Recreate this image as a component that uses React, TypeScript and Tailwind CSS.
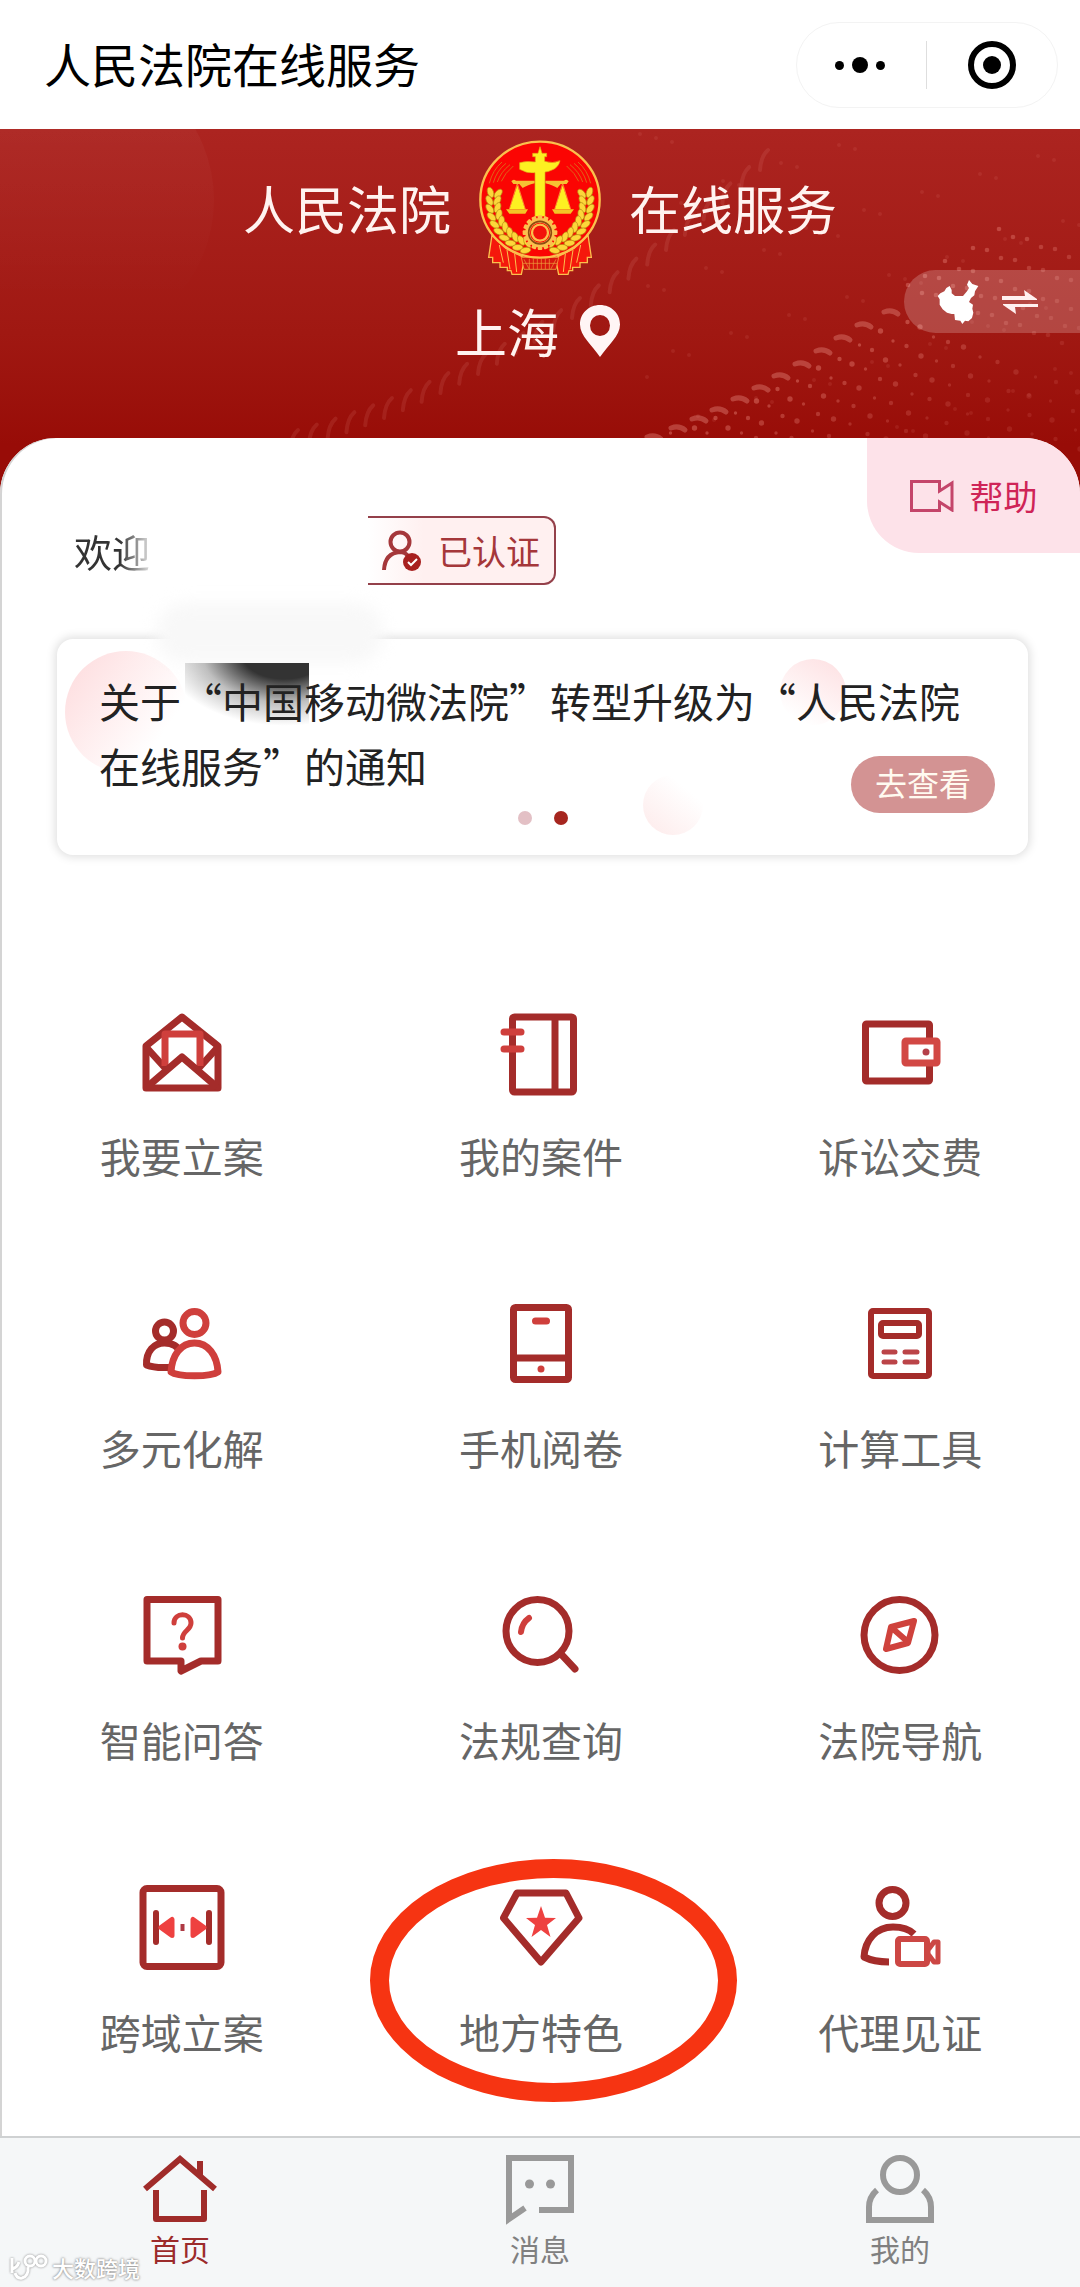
import type { ReactNode } from "react";

const DARK = "#a42c2a";
const LIGHT = "#cf3f3c";

/* ---------- header art ---------- */

type Dot = { x: number; y: number; r: number; o: number };

const strandHeads = [
  [888, 312], [861, 324], [840, 336], [820, 348], [799, 360], [778, 371], [758, 382],
  [737, 392], [716, 402], [696, 410], [675, 418], [651, 426],
];

const dots: Dot[] = [];
strandHeads.forEach(([x, y], s) => {
  for (let i = 1; i < 16; i++) {
    dots.push({
      x: x + 8 + i * (11 + i * 0.5),
      y: y + i * 7 + ((s * 7 + i * 3) % 5),
      r: 1.7 + ((s + i) % 3) * 0.5,
      o: Math.max(0.14, 0.42 - i * 0.03),
    });
  }
});
[[999, 243], [973, 259], [945, 275], [925, 287], [908, 299]].forEach(([x, y], s) => {
  for (let i = 0; i < 12; i++) {
    dots.push({ x: x + i * 14, y: y - 14 + i * 5 + ((i + s) % 2) * 3, r: 2.3, o: 0.36 - i * 0.02 });
  }
});
for (let i = 0; i < 70; i++) {
  dots.push({ x: 640 + ((i * 83) % 440), y: 134 + ((i * 47) % 300), r: 2, o: 0.12 });
}

const faintStreaks = Array.from({ length: 26 }, (_, i) => {
  const t = i / 25;
  return { x: 290 + 470 * t, y: 430 - 130 * t - 150 * t * t };
});

function HeaderArt() {
  return (
    <svg
      className="absolute inset-0 h-full w-full"
      viewBox="0 129 1080 371"
      preserveAspectRatio="xMaxYMin slice"
      aria-hidden="true"
    >
      <defs>
        <linearGradient id="glow" x1="0" y1="0" x2="0" y2="1">
          <stop offset="0.2" stopColor="#fff" stopOpacity="0.035" />
          <stop offset="0.85" stopColor="#fff" stopOpacity="0" />
        </linearGradient>
      </defs>
      <circle cx="70" cy="200" r="144" fill="url(#glow)" />
      {faintStreaks.map((p, i) => (
        <path
          key={i}
          d={`M${p.x} ${p.y + 20} q1 -14 8 -20`}
          fill="none"
          stroke="#f09a90"
          strokeWidth="4"
          strokeLinecap="round"
          opacity="0.13"
        />
      ))}
      {strandHeads.map(([x, y], i) => (
        <path
          key={i}
          d={`M${x - 4} ${y + i} q8 -3 14 2`}
          fill="none"
          stroke="#e58a80"
          strokeWidth="5"
          strokeLinecap="round"
          opacity="0.4"
        />
      ))}
      {dots.map((d, i) => (
        <circle key={i} cx={d.x} cy={d.y} r={d.r} fill="#f08f84" opacity={d.o} />
      ))}
    </svg>
  );
}

function Emblem() {
  const gold = "#fbc04d";
  const yellow = "#fdf021";
  const leaves = Array.from({ length: 10 }, (_, i) => {
    const a = ((192 - i * 9.5) * Math.PI) / 180;
    return { x: 302 + 140 * Math.cos(a), y: 248 + 138 * Math.sin(a), rot: 10 - i * 9 };
  });
  const teeth = Array.from({ length: 16 }, (_, i) => i * 22.5);
  const half = (
    <>
      <path
        d="M158 345 L148 412 H160 V428 H182 V442 H204 V452 H215 L218 463 H246 L256 414 L200 385 Z"
        fill="#f5180c"
        stroke={gold}
        strokeWidth="4"
      />
      <path d="M180 375 L192 428 M203 390 L212 448 M226 402 L232 456" stroke={gold} strokeWidth="3" fill="none" />
    </>
  );
  const wheat = (
    <>
      {leaves.map((l, i) => (
        <g key={i} transform={`translate(${l.x} ${l.y}) rotate(${l.rot})`} fill="#fdd63a" stroke="#b38d12" strokeWidth="2">
          <ellipse cx="-10" cy="-6" rx="9" ry="16" transform="rotate(-30)" />
          <ellipse cx="10" cy="-6" rx="9" ry="16" transform="rotate(30)" />
        </g>
      ))}
      <path d="M150 190 Q160 150 188 126 M162 188 Q172 152 200 130 M174 186 Q184 156 212 134 M186 184 Q196 160 222 138" stroke="#d8761c" strokeWidth="2.5" fill="none" />
      <path d="M234 190 L210 268 M234 190 L258 268" stroke={gold} strokeWidth="2" />
      <path d="M234 196 L211 268 H257 Z" fill={yellow} />
      <path d="M200 268 H266 L258 281 H210 Z" fill="#f3c526" />
    </>
  );
  return (
    <svg className="h-[136px] w-[122px] shrink-0" viewBox="119 60 366 408" role="img" aria-label="法院徽标">
      {half}
      <g transform="translate(604 0) scale(-1 1)">{half}</g>
      <path d="M246 412 H358 L350 448 H254 Z" fill="#d8170e" stroke={gold} strokeWidth="2" />
      <path d="M254 418 L270 448 M270 416 V448 M282 416 V448 M294 416 V448 M306 416 V448 M318 416 V448 M330 416 V448 M350 418 L334 448 M250 430 H354" stroke="#efa03d" strokeWidth="2" />
      <ellipse cx="302" cy="239" rx="179" ry="174" fill="#fb0503" stroke={gold} strokeWidth="7" />
      {wheat}
      <g transform="translate(604 0) scale(-1 1)">{wheat}</g>
      <path d="M216 184 Q222 176 230 182 L286 182 V190 Q262 196 250 204 L240 192 H222 Z M388 184 Q382 176 374 182 L318 182 V190 Q342 196 354 204 L364 192 H382 Z" fill="#f6c133" />
      <path
        d="M302 80 L308 100 H322 V110 H316 V124 Q340 132 362 122 Q358 142 338 150 Q326 156 317 156 V296 H287 V158 Q264 162 241 148 V128 Q262 122 288 126 V110 H280 V100 H296 Z"
        fill={yellow}
        stroke="#e0a818"
        strokeWidth="2"
      />
      <circle cx="302" cy="338" r="50" fill="#fb0503" />
      {teeth.map((a) => (
        <rect key={a} x="295" y="286" width="14" height="16" rx="3" fill={gold} transform={`rotate(${a} 302 338)`} />
      ))}
      <circle cx="302" cy="338" r="37" fill="none" stroke={gold} strokeWidth="14" />
      <circle cx="302" cy="338" r="34" fill="none" stroke="#8f4a12" strokeWidth="5" />
      <circle cx="302" cy="338" r="24" fill="#f3130b" stroke={gold} strokeWidth="7" />
    </svg>
  );
}

function PinIcon() {
  return (
    <svg className="h-[54px] w-[42px]" viewBox="0 0 42 54" aria-hidden="true">
      <path
        fillRule="evenodd"
        d="M21 1 C9.500 1 1 9.500 1 20.500 C1 32 13 41 21 53 C29 41 41 32 41 20.500 C41 9.500 32.500 1 21 1 Z M21 11 A10 10.500 0 1 1 21 32 A10 10.500 0 1 1 21 11 Z"
        fill="#fff5f5"
      />
    </svg>
  );
}

function ChinaIcon() {
  return (
    <svg className="h-[44px] w-[42px]" viewBox="0 0 126 132" aria-hidden="true">
      <path
        d="M38 18 L44 30 L44 40 L54 48 L78 48 L90 34 L96 24 L90 14 L96 0 L106 12 L124 18 L114 34 L112 46 L102 54 L96 66 L108 74 L106 86 L109 98 L105 114 L94 124 L84 122 L76 132 L70 122 L54 120 L52 102 L44 102 L30 98 L17 88 L8 74 L8 58 L2 48 L10 40 L22 34 L28 24 Z"
        fill="#fff"
      />
    </svg>
  );
}

function SwapIcon() {
  return (
    <svg className="h-[26px] w-[38px]" viewBox="0 0 38 26" aria-hidden="true">
      <path d="M1 7 H24 L23 1 L36 10 V11 H1 Z M37 18 H14 L15 25 L2 16 V15 H37 Z" fill="#fff0f0" />
    </svg>
  );
}

/* ---------- service icons, drawn on a 96px board ---------- */

function Board({ children, width = 7 }: { children: ReactNode; width?: number }) {
  return (
    <svg
      className="h-24 w-24"
      viewBox="0 0 96 96"
      fill="none"
      stroke={DARK}
      strokeWidth={width}
      strokeLinejoin="round"
      aria-hidden="true"
    >
      {children}
    </svg>
  );
}

const FilingIcon = () => (
  <Board>
    <path d="M12 42 L48 13 L84 42 V84 H12 Z" />
    <path d="M12 43 L32 65 M84 43 L64 65" />
    <path d="M31 62 V30 H66 V62" stroke={LIGHT} strokeWidth="7" />
    <path d="M13 83 L48 53 L83 83" />
  </Board>
);

const CasesIcon = () => (
  <Board>
    <rect x="19.500" y="13" width="61" height="75" rx="2" />
    <path d="M62 13 V88" />
    <path d="M11 28 H28 M11 45 H28" stroke={LIGHT} strokeLinecap="round" />
  </Board>
);

const PaymentIcon = () => (
  <Board>
    <rect x="13.500" y="20" width="64" height="57" rx="1" />
    <rect x="53" y="37" width="32" height="22" rx="1" fill="#fff" stroke="#d24844" />
    <circle cx="74" cy="48" r="3.500" fill="#b5404a" stroke="none" />
  </Board>
);

const MediationIcon = () => (
  <Board>
    <circle cx="30.500" cy="35" r="9" />
    <path d="M12.500 69 C12 55 20 47 30.500 47 C38 47 44 50 47 57 C44 62 40 72 40 71 C30 72 20 72 12.500 69 Z" />
    <circle cx="60.500" cy="27" r="11.500" stroke={LIGHT} />
    <path d="M37 76 C38 59 47 47 60.500 47 C74 47 83 59 84 76 C77 81 44 81 37 76 Z" stroke={LIGHT} fill="#fff" />
  </Board>
);

const PhoneReadIcon = () => (
  <Board>
    <rect x="20.500" y="11.500" width="55" height="72" rx="2" />
    <path d="M21 62 H76" />
    <path d="M42.500 25 H53.500" stroke={LIGHT} strokeWidth="7" strokeLinecap="round" />
    <circle cx="48" cy="73" r="3.500" fill={LIGHT} stroke="none" />
  </Board>
);

const CalculatorIcon = () => (
  <Board width={6}>
    <rect x="19" y="15" width="58" height="65" rx="2" />
    <rect x="29" y="27" width="38" height="13" rx="2" />
    <path d="M32 56 H43 M53 56 H65 M32 66 H43 M53 66 H65" stroke="#bb4448" strokeWidth="5" strokeLinecap="round" />
  </Board>
);

const QuestionIcon = () => (
  <Board>
    <path d="M43 73 H13 V11.500 H84 V73 H67 L47 83 V73 Z" />
    <path d="M40 35 C40 24 57 24 57 35 C57 42 48.500 43 48.500 50" stroke={LIGHT} strokeWidth="5" strokeLinecap="round" />
    <circle cx="48.500" cy="58.500" r="4" fill={LIGHT} stroke="none" />
  </Board>
);

const SearchLawIcon = () => (
  <Board>
    <circle cx="44.500" cy="43" r="31.500" />
    <path d="M68 66 L82 81" strokeLinecap="round" />
    <path d="M36 30 Q29 35 28 44" stroke={LIGHT} strokeWidth="6" strokeLinecap="round" />
  </Board>
);

const CompassIcon = () => (
  <Board>
    <circle cx="47.500" cy="47" r="35.500" />
    <path d="M62 33 L39 39 L34 61 L56 55 Z M40 40 L56 54" stroke="#cf423c" strokeWidth="6" />
  </Board>
);

const CrossRegionIcon = () => (
  <Board>
    <rect x="9" y="8.500" width="78" height="78" rx="4" />
    <path d="M22 33 V62 M75 33 V62" strokeWidth="6" strokeLinecap="round" />
    <path d="M27 47.500 L38 39.500 V55.500 Z M70 47.500 L59 39.500 V55.500 Z" fill="#ee4140" stroke="#ee4140" strokeWidth="5" />
    <path d="M48.500 44 V51" stroke="#ae3a44" strokeWidth="4" />
  </Board>
);

const LocalIcon = () => (
  <Board>
    <path d="M24 13 H73 L86 38 L48 82 L10.500 38 Z" />
    <path
      d="M48 26 L52 37.800 L63 38 L54 45 L57.500 57 L48 50 L38.500 57 L42 45 L33 38 L44 37.800 Z"
      fill="#ee4140"
      stroke="none"
    />
  </Board>
);

const WitnessIcon = () => (
  <Board>
    <circle cx="40.500" cy="23" r="13.500" />
    <path d="M37 82 C27 82 18 80 12 77 C13 60 24 47 41 47 C50 47 57 49 62 54" />
    <rect x="46" y="59" width="29" height="25" rx="2" fill="#fff" stroke="#cc4744" strokeWidth="6" />
    <path d="M76 70 L82 62 H86 V82 H82 L76 74 Z" stroke="#cc4744" strokeWidth="5" />
  </Board>
);

const services: { label: string; icon: ReactNode; marked?: boolean }[] = [
  { label: "我要立案", icon: <FilingIcon /> },
  { label: "我的案件", icon: <CasesIcon /> },
  { label: "诉讼交费", icon: <PaymentIcon /> },
  { label: "多元化解", icon: <MediationIcon /> },
  { label: "手机阅卷", icon: <PhoneReadIcon /> },
  { label: "计算工具", icon: <CalculatorIcon /> },
  { label: "智能问答", icon: <QuestionIcon /> },
  { label: "法规查询", icon: <SearchLawIcon /> },
  { label: "法院导航", icon: <CompassIcon /> },
  { label: "跨域立案", icon: <CrossRegionIcon /> },
  { label: "地方特色", icon: <LocalIcon />, marked: true },
  { label: "代理见证", icon: <WitnessIcon /> },
];

/* ---------- tab bar icons ---------- */

const HomeIcon = () => (
  <svg className="h-[70px] w-[76px]" viewBox="0 0 76 70" fill="none" stroke="#a02c2a" strokeWidth="6" aria-hidden="true">
    <path d="M3 34 L38 4 L73 34" />
    <path d="M58 6 V20" />
    <path d="M14 35 V64 H62 V35" strokeLinejoin="round" />
  </svg>
);

const MessageIcon = () => (
  <svg className="h-[70px] w-[68px]" viewBox="0 0 68 70" fill="none" stroke="#999" strokeWidth="6" aria-hidden="true">
    <path d="M33 55 H65 V3 H3 V64 L19 53" />
    <circle cx="23.500" cy="29" r="4.500" fill="#999" stroke="none" />
    <circle cx="44.500" cy="29" r="4.500" fill="#999" stroke="none" />
  </svg>
);

const ProfileIcon = () => (
  <svg className="h-[70px] w-[68px]" viewBox="0 0 68 70" fill="none" stroke="#999" strokeWidth="6" aria-hidden="true">
    <circle cx="34" cy="20" r="17" />
    <path d="M11 35 Q3 42 3 52 V65 H65 V52 Q65 42 57 35" />
  </svg>
);

const tabs = [
  { label: "首页", icon: <HomeIcon />, active: true },
  { label: "消息", icon: <MessageIcon />, active: false },
  { label: "我的", icon: <ProfileIcon />, active: false },
];

export default function App() {
  return (
    <div
      lang="zh-CN"
      className="flex min-h-screen w-full flex-col bg-white font-['Noto_Sans_CJK_SC',sans-serif] text-[#222]"
    >
      <div className="flex items-center justify-between pt-[22px] pr-[22px] pb-[21px] pl-[44px]">
        <h1 className="pb-1 text-[47px] leading-[60px] text-black">人民法院在线服务</h1>
        <div className="flex h-[86px] w-[262px] items-center rounded-full border border-[#f3f3f3]">
          <button type="button" aria-label="更多" className="flex h-full w-[129px] items-center justify-center gap-2 pr-1">
            <span className="size-[9px] rounded-full bg-black" />
            <span className="size-4 rounded-full bg-black" />
            <span className="size-[9px] rounded-full bg-black" />
          </button>
          <span className="h-12 w-px bg-[#dedede]" />
          <button type="button" aria-label="关闭" className="flex h-full flex-1 items-center justify-center">
            <span className="flex size-12 items-center justify-center rounded-full border-6 border-black">
              <span className="size-[18px] rounded-full bg-black" />
            </span>
          </button>
        </div>
      </div>

      <header className="relative bg-linear-to-b from-[#ac2420] via-[#a01812] via-55% to-[#980c07] to-85% pt-[11px] pb-[139px] text-[52px] leading-[60px] text-[#fff3f0]">
        <HeaderArt />
        <div className="relative flex items-center justify-center gap-7">
          <span>人民法院</span>
          <Emblem />
          <span>在线服务</span>
        </div>
        <button type="button" className="relative mx-auto mt-[25px] flex items-center justify-center gap-5 pr-1">
          <span>上海</span>
          <PinIcon />
        </button>
        <button
          type="button"
          aria-label="切换地区"
          className="absolute top-[141px] right-0 flex h-[63px] w-[176px] items-center gap-[22px] rounded-l-full bg-white/20 pl-[33px]"
        >
          <ChinaIcon />
          <SwapIcon />
        </button>
      </header>

      <main className="relative -mt-[62px] flex-1 overflow-hidden rounded-t-[56px] bg-white pb-[75px] shadow-[inset_2px_0_0_#d4d4d4]">
        <div className="flex items-start">
          <div className="flex items-center pt-[78px] pl-[74px]">
            <p className="w-[294px] text-[38px] leading-[64px]">
              <span className="bg-linear-to-r from-[#333] from-60% to-[#3333] to-98% bg-clip-text text-transparent">
                欢迎
              </span>
            </p>
            <div className="flex h-[69px] items-center gap-4 rounded-r-xl border-y-2 border-r-2 border-[#94404a] bg-linear-to-r from-white to-[#fff0f0] to-30% px-[14px] text-[34px] leading-[60px] text-[#a5373a]">
              <svg className="h-[42px] w-[40px]" viewBox="0 0 40 42" fill="none" stroke="#a5373a" strokeWidth="4" aria-hidden="true">
                <circle cx="18" cy="12" r="9.500" />
                <path d="M2 40 Q3 23 18 22 Q23 22 26 26" />
                <circle cx="30" cy="32" r="9" fill="#a8201f" stroke="none" />
                <path d="M26 32 L29 35 L35 29" stroke="#fff" strokeWidth="2" />
              </svg>
              <span>已认证</span>
            </div>
          </div>
          <button
            type="button"
            className="ml-auto flex h-[115px] w-[213px] items-center justify-center gap-4 rounded-bl-[52px] bg-[#fde2e9] text-[34px] leading-[60px] text-[#cf2457]"
          >
            <svg className="h-8 w-[44px]" viewBox="0 0 44 32" fill="none" stroke="#c4456a" strokeWidth="3" aria-hidden="true">
              <path d="M1.500 1.500 H29.500 V11 L42 3 V30 L29.500 22 V30.500 H1.500 Z" />
            </svg>
            帮助
          </button>
        </div>

        <section className="relative mt-[54px] mr-[52px] ml-[57px] rounded-2xl bg-white pt-[29px] pb-[30px] shadow-[0_0_10px_2px_rgba(0,0,0,0.13)]">
          <div className="absolute top-[12px] left-[8px] size-[122px] rounded-full bg-linear-125 from-[#fddadc] to-white to-75%" />
          <div className="absolute top-[20px] right-[182px] size-[66px] rounded-full bg-linear-210 from-[#fddfe1] to-white to-85%" />
          <div className="absolute right-[325px] bottom-[20px] size-[60px] rounded-full bg-linear-40 from-[#fdeaea] to-white to-75%" />
          <div className="absolute -top-[36px] left-[100px] h-[60px] w-[226px] rounded-[28px] bg-[#f8f8f8] blur-sm" />
          <div className="absolute top-[24px] left-[128px] h-[66px] w-[124px] bg-[radial-gradient(ellipse_120px_72px_at_80%_-14%,#333_35%,#8888_68%,transparent)]" />
          <p className="relative px-[42px] text-[41px] leading-[65px]">
            关于“中国移动微法院”转型升级为“人民法院
            <br />
            在线服务”的通知
          </p>
          <div className="mt-[13px] flex justify-center gap-[22px]">
            <span className="size-3.5 rounded-full bg-[#e3c0c5]" />
            <span className="size-3.5 rounded-full bg-[#a6261f]" />
          </div>
          <button
            type="button"
            className="absolute right-[33px] bottom-[42px] h-[57px] w-[144px] rounded-full bg-[#d39393] pb-1 text-[32px] leading-[53px] text-[#fffaf0]"
          >
            去查看
          </button>
        </section>

        <section className="mt-[149px] grid grid-cols-3 gap-y-[111px] pl-[2px]">
          {services.map((s) => (
            <button key={s.label} type="button" className="relative flex flex-col items-center">
              {s.icon}
              <span className="mt-[25px] text-[41px] leading-[60px] text-[#666]">{s.label}</span>
              {s.marked && (
                <span className="absolute -top-[21px] left-1/2 -ml-[171px] h-[243px] w-[367px] rounded-[50%] border-[19px] border-[#f63412]" />
              )}
            </button>
          ))}
        </section>
      </main>

      <nav className="relative grid grid-cols-3 border-t-2 border-[#cfd1d2] bg-[#f5f7f8] pt-[17px] pb-[19px]">
        {tabs.map((t) => (
          <a key={t.label} href="#" className="flex flex-col items-center">
            {t.icon}
            <span className={t.active ? "mt-[3px] text-[30px] leading-10 text-[#9c2b2b]" : "mt-[3px] text-[30px] leading-10 text-[#808080]"}>
              {t.label}
            </span>
          </a>
        ))}
        <div className="absolute bottom-[4px] left-2 flex items-center gap-1 text-[22px] leading-8 font-medium text-white [text-shadow:0_0_2px_#888,0_0_3px_#aaa]">
          <svg className="h-7 w-10 drop-shadow-[0_0_1px_#888]" viewBox="0 0 40 28" fill="none" stroke="#fff" strokeWidth="3" aria-hidden="true">
            <path d="M4 5 V20 M4 16 Q9 15 11 9 M7 20 Q9 26 14 25 Q21 23 20 14" />
            <circle cx="22" cy="8" r="5" />
            <circle cx="33" cy="8" r="5" />
          </svg>
          大数跨境
        </div>
      </nav>
    </div>
  );
}
